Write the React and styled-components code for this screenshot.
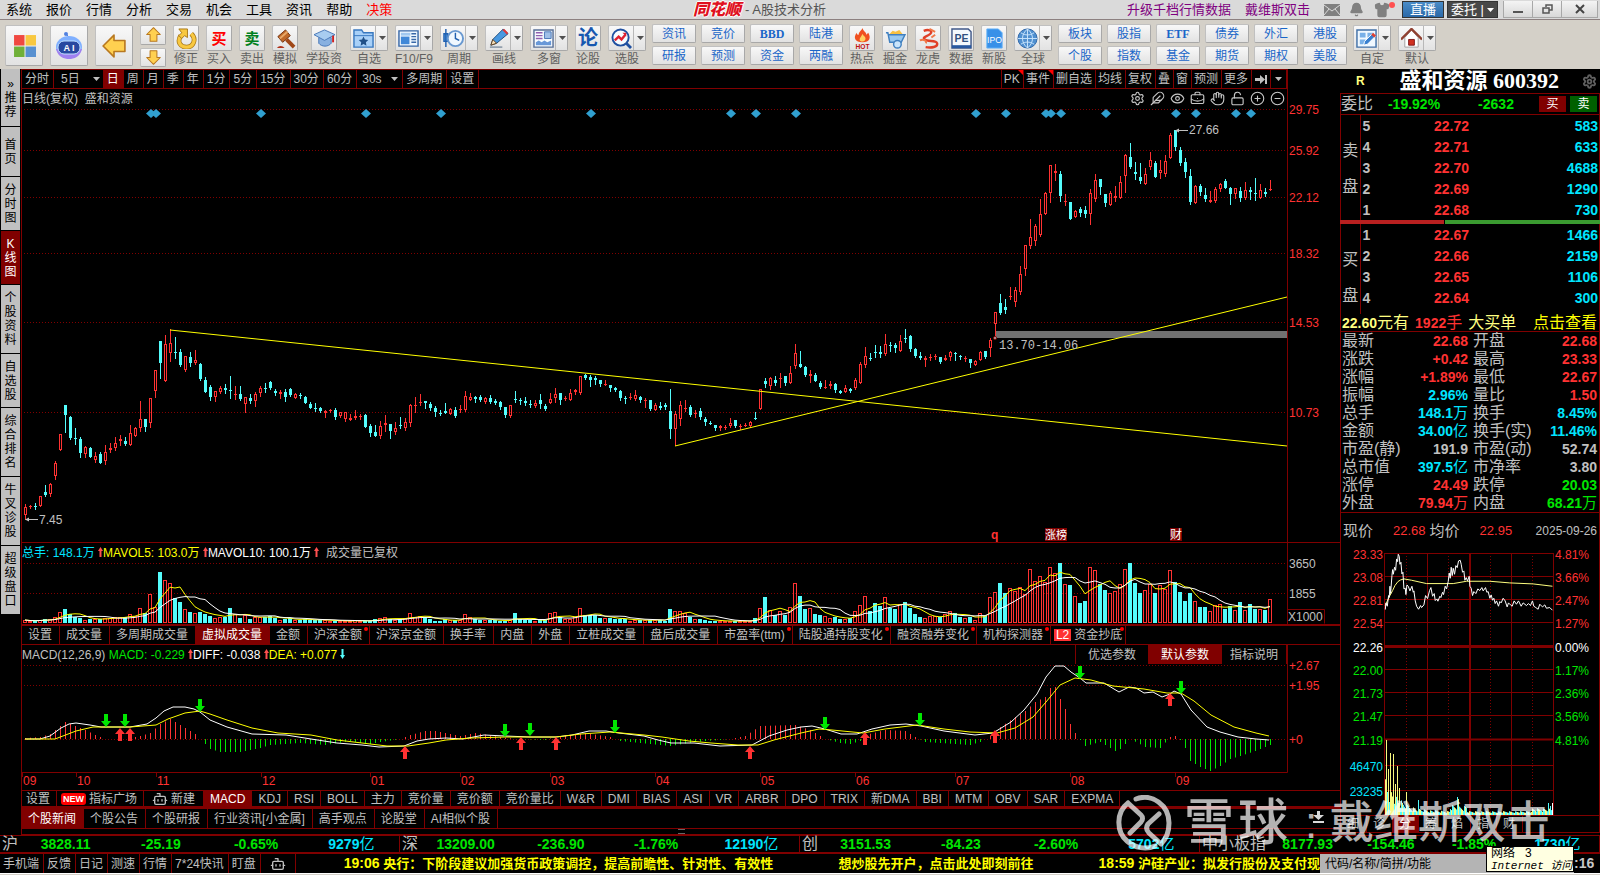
import React from "react";
import styled, { createGlobalStyle, css } from "styled-components";
import {
  Settings,
  Feather,
  Eye,
  BriefcaseBusiness,
  Hand,
  LockOpen,
  CirclePlus,
  CircleMinus,
  Bot,
  Bell,
  Shirt,
} from "lucide-react";

const RED = "#ff3232";
const GREEN = "#00e600";
const CYAN = "#00e5ff";
const LINE = "#800000";
const GREY = "#c0c0c0";

/* one entry per day: r = up, c = down, then high, body top, body bottom, low */
const CANDLES = `
r504,507,515,519 r505,506,507,508 c503,506,507,509 r496,496,506,506 c485,492,495,496 r483,484,494,496 r461,463,476,479 r434,434,450,450 c405,405,415,432 c416,417,438,439
c428,438,439,444 c437,439,453,457 r446,447,454,457 c447,448,457,457 r452,456,460,462 c452,454,463,463 r445,452,461,464 r443,448,450,452 r437,443,448,450 r435,439,441,445
c437,441,444,445 r425,433,445,445 r427,428,436,436 r401,419,428,431 c419,419,427,431 r398,398,423,427 r370,370,391,397 c341,341,363,378 r335,344,381,381 r329,343,353,361
c337,352,353,358 c349,352,365,366 r356,356,370,371 c352,357,363,366 r350,360,363,364 c363,364,379,380 c377,380,392,392 c385,387,397,400 r391,391,397,401 r386,388,392,393
c384,388,390,393 c376,390,391,398 r386,394,395,399 c386,394,399,400 r397,397,404,412 c394,398,401,403 r392,394,401,406 r386,388,393,396 c383,388,389,392 c381,382,388,389
c389,391,393,395 r390,392,394,398 c389,392,397,401 c388,389,395,396 r393,394,398,398 c393,395,396,398 c396,397,403,403 c402,404,408,408 c403,408,409,411 c407,408,411,412
r410,411,413,417 r409,410,411,412 c408,410,417,419 r412,412,416,417 r412,412,419,421 r414,418,420,420 r410,416,418,419 r414,416,417,419 c414,415,427,427 c424,426,433,436
c425,432,436,436 r421,426,436,438 r415,423,425,431 c424,424,431,438 r422,428,432,434 c417,425,426,428 r418,422,428,430 r404,405,423,426 r397,405,406,412 r394,402,403,405
c401,401,403,408 c402,404,408,410 c406,408,412,416 c410,413,414,415 c403,411,413,413 r408,409,414,414 c407,410,416,417 r405,409,410,412 r391,396,410,411 r393,397,400,400
c396,397,399,402 c395,397,400,401 r397,398,402,403 c395,398,402,403 c399,401,403,404 c401,402,407,409 c407,407,415,417 r405,405,416,417 c391,399,400,402 c398,400,401,404
c397,401,403,405 c400,404,405,407 r400,403,406,407 c394,400,404,408 c404,406,409,410 r393,399,403,403 r388,394,398,402 c393,393,400,404 r396,398,399,400 r389,393,400,400
r389,390,392,394 r376,376,393,394 c374,375,378,379 c375,377,380,386 c376,378,380,384 c380,380,384,386 r380,384,385,385 c385,385,388,391 c387,388,390,391 c390,391,398,400
c396,398,399,403 r393,397,398,399 r390,395,399,400 c396,397,400,402 r398,400,401,407 c400,400,409,410 r403,405,410,410 c402,406,408,409 c403,405,407,409 c389,411,429,438
r411,414,429,445 r401,405,419,425 r400,408,409,411 c405,407,415,416 r410,413,414,417 c408,411,417,419 c417,419,422,425 c421,423,424,424 c425,425,428,430 r425,426,428,430
r425,427,428,429 r418,423,426,427 c420,420,426,427 r424,426,427,429 r423,425,426,426 r421,422,426,427 c412,418,419,419 r389,389,409,409 c378,381,384,387 r377,378,386,389
c376,380,383,385 r373,378,379,387 c376,376,383,385 r366,373,383,383 r344,353,366,368 c351,364,367,367 c366,367,375,376 r370,374,376,382 c373,375,381,381 c381,383,387,388
r380,387,388,388 r381,384,386,388 c383,384,390,392 c390,391,393,393 r385,388,392,392 c388,389,391,392 r378,380,388,389 r362,364,383,383 r347,356,365,367 c353,358,359,360
c345,352,353,357 c346,352,354,357 r334,344,354,355 c342,345,346,351 c343,345,348,352 r335,341,351,351 c329,338,339,342 c335,336,349,351 c348,349,356,357 c352,356,358,359
r356,358,360,366 r354,357,358,360 r354,356,357,359 c357,357,362,363 r355,358,360,360 r351,352,357,360 c352,353,354,360 c355,356,357,359 r356,358,359,361 c359,359,363,367
r360,361,365,365 r351,352,360,360 c351,351,357,358 r338,340,348,356 r312,312,324,338 c294,303,313,314 c299,307,310,313 r287,296,297,299 r287,290,302,306 r266,274,292,294
r245,245,269,275 r219,237,246,248 r224,226,241,245 r199,214,235,236 r192,193,214,214 r165,165,193,202 r164,171,173,180 c171,174,196,201 r194,201,202,205 c202,202,219,219
r210,211,217,217 c207,209,213,216 c206,210,214,217 r189,193,214,224 r174,180,199,201 c179,179,187,194 c194,194,203,206 r191,193,205,205 r186,196,198,201 r176,182,198,198
r154,155,176,192 c143,157,167,168 c162,172,174,179 c163,177,181,183 r168,174,184,184 r152,160,167,169 c161,163,177,177 r160,170,173,178 r155,161,174,176 r133,135,158,158
c130,130,147,150 c147,150,163,165 c158,162,172,177 c169,176,202,204 r185,186,203,203 c184,186,192,195 c188,195,199,201 r191,200,202,202 r187,189,201,202 r183,184,189,191
c179,181,188,188 c187,188,194,204 r188,188,194,198 c187,191,198,201 r182,190,198,199 c187,190,192,199 c178,193,194,200 r184,190,198,198 c188,192,194,196 r180,189,190,190`
  .trim()
  .split(/\s+/)
  .map((s, i) => {
    const [high, top, bottom, low] = s.slice(1).split(",").map(Number);
    return { up: s[0] === "r", x: 25 + 5 * i, high, top, bottom, low };
  });

const VOLUMES = `
3 2 2 3 4 4 6 11 14 9 6 5 3 4 4 4 5 5 6 6 6 9 7 15 10 29 16 51 43 40 25 21 14 11 10 11 9 7 5 6 6 15 9 5 8 4 6 6 6 7
5 3 4 5 3 3 4 3 3 3 3 2 2 2 2 2 3 2 2 2 4 5 6 4 3 4 5 10 6 7 6 4 2 2 4 3 3 3 9 6 4 3 3 3 3 2 2 3 10 4
3 3 2 3 3 10 11 6 4 4 6 15 8 8 8 5 5 5 4 4 4 2 3 3 3 3 3 3 2 14 12 12 10 6 4 4 3 2 2 2 2 2 2 2 2 2 5 15 26 13
8 12 8 16 40 27 14 15 9 8 7 5 6 4 4 5 12 18 27 12 20 17 26 15 14 19 21 15 9 6 5 7 7 6 9 12 10 6 5 6 3 10 7 26 31 40 30 35 32 36
29 54 42 47 41 56 50 60 39 38 27 20 22 56 53 39 33 30 32 39 54 60 40 30 33 39 30 38 34 53 41 31 22 30 22 16 16 12 18 19 14 17 13 21 13 19 14 14 13 24`
  .trim()
  .split(/\s+/)
  .map(Number);

const average = (size) =>
  VOLUMES.map((_, i) => {
    const part = VOLUMES.slice(Math.max(0, i - size + 1), i + 1);
    const mean = part.reduce((a, b) => a + b, 0) / part.length;
    return `${25 + 5 * i},${(623 - mean).toFixed(1)}`;
  }).join(" ");

/* [day, height], the days between are interpolated */
const HIST_KEYS = [
  [0, 1], [3, 2], [5, 5], [6, 9], [8, 17], [10, 13], [12, 9], [14, 4], [16, 0], [20, 0], [23, 3], [25, 6], [27, 15], [29, 20],
  [31, 14], [33, 8], [34, 5], [35, 0], [36, -5], [37, -10], [39, -13], [43, -13], [47, -9], [49, -6], [55, -4], [60, -6],
  [65, -2], [67, -4], [69, -5], [71, -3], [75, 0], [77, 4], [80, 8], [82, 8], [87, 3], [90, 6], [95, 2], [98, 0], [104, -1],
  [106, 2], [112, 6], [117, 2], [119, -2], [125, -5], [129, -7], [134, -3], [141, 0], [144, 3], [147, 13], [154, 14], [157, 9],
  [160, 0], [163, -4], [165, -5], [167, -2], [168, 4], [172, 9], [176, 8], [178, 2], [180, -3], [189, -6], [191, -3], [193, 3],
  [195, 12], [198, 22], [200, 28], [202, 37], [204, 42], [205, 51], [206, 52], [207, 40], [208, 30], [209, 15], [210, 6],
  [211, -1], [212, -7], [215, -3], [218, -12], [219, -10], [221, 0], [224, -8], [227, -9], [229, 2], [230, 3], [231, -1],
  [232, -9], [233, -22], [235, -28], [237, -32], [239, -27], [241, -20], [243, -17], [246, -12], [249, -6],
];
const HIST = [];
HIST_KEYS.slice(1).forEach(([to, b], k) => {
  const [from, a] = HIST_KEYS[k];
  for (let i = from; i < to; i++) HIST.push(a + ((b - a) * (i - from)) / (to - from));
});
HIST.push(-6);

const DIFF =
  "25,739 40,739 50,736 61,728 69,724 76,723 90,725 101,727 130,727 147,724 156,718 164,711 173,707 185,707 194,709 200,712 210,720 227,727 252,734 286,735 311,739 337,743 362,745 379,747 404,746 417,741 429,739 446,738 463,739 484,735 505,736 530,737 556,737 572,735 589,731 606,731 619,733 644,736 658,740 671,743 694,743 720,746 752,745 769,736 787,730 801,727 812,726 825,729 841,734 857,734 872,729 890,725 906,724 921,726 944,731 975,735 993,733 1011,722 1024,710 1037,694 1046,677 1055,666 1064,666 1071,672 1080,678 1086,683 1104,683 1119,692 1129,687 1136,688 1144,693 1153,692 1162,697 1170,694 1174,691 1181,694 1191,710 1207,727 1220,732 1238,737 1256,739 1269,740";
const DEA =
  "25,739 55,739 76,731 93,727 130,727 156,725 168,719 185,713 200,711 210,714 227,720 252,728 278,733 311,735 337,740 362,743 387,746 408,746 429,743 446,740 471,738 505,737 556,737 581,734 610,732 644,735 662,737 689,741 711,743 738,745 758,745 774,740 801,733 819,729 832,730 863,733 885,729 917,725 944,729 970,732 997,733 1015,728 1033,717 1046,702 1060,685 1075,678 1091,680 1113,686 1144,689 1167,693 1181,693 1194,701 1211,715 1234,727 1256,733 1269,736";

const DOWN_MARKS = [[106, 727], [125, 727], [200, 712], [505, 737], [530, 736], [615, 733], [825, 730], [920, 726], [1080, 679], [1181, 694]];
const UP_MARKS = [[120, 728], [130, 728], [405, 746], [521, 737], [556, 737], [750, 746], [865, 732], [995, 730], [1170, 693]];
const MONTHS = [["09", 23], ["10", 77], ["11", 157], ["12", 262], ["01", 371], ["02", 461], ["03", 551], ["04", 656], ["05", 761], ["06", 856], ["07", 956], ["08", 1071], ["09", 1176]];
const DIAMONDS = [151, 156, 261, 366, 441, 591, 731, 756, 796, 976, 1006, 1046, 1051, 1061, 1106, 1176, 1196, 1236, 1251];
const PRICES = [["29.75", 109], ["25.92", 150], ["22.12", 197], ["18.32", 253], ["14.53", 322], ["10.73", 412]];

const Global = createGlobalStyle`
  * { box-sizing: border-box; }
  body {
    margin: 0;
    background: #000;
    color: ${GREY};
    font: 12px/16px "Liberation Sans", "Noto Sans CJK SC", sans-serif;
  }
  button, input { font: inherit; }
  button { cursor: pointer; white-space: nowrap; }
`;

const Page = styled.div`
  position: relative;
  min-height: 100vh;
  display: flex;
  flex-direction: column;
  overflow: hidden;
`;

/* ---------- title bar ---------- */

const TitleBar = styled.header`
  display: flex;
  justify-content: space-between;
  align-items: center;
  height: 20px;
  background: #dadada;
  border-bottom: 1px solid #8c8080;
  font-size: 13px;
  color: #000;
`;
const Menu = styled.nav`
  display: flex;
  gap: 14px;
  padding-left: 6px;
`;
const MenuLink = styled.a`
  color: ${(p) => (p.$hot ? "#f00" : "#000")};
  text-decoration: none;
`;
const AppTitle = styled.div`
  display: flex;
  align-items: center;
  gap: 4px;
  color: #555;
`;
const Logo = styled.b`
  color: #e01020;
  font-size: 16px;
  font-weight: 900;
  font-style: italic;
  text-shadow: 1px 0 #fff, -1px 0 #fff, 0 1px #fff, 0 -1px #fff;
`;
const TitleRight = styled.div`
  display: flex;
  align-items: center;
  height: 100%;
  padding-right: 2px;
`;
const Promo = styled.a`
  margin-right: 14px;
  color: #800080;
  text-decoration: none;
`;
const TitleIcon = styled.button`
  position: relative;
  display: flex;
  width: 25px;
  padding: 0;
  border: 0;
  background: none;
  color: #808080;
`;
const Dot = styled.span`
  position: absolute;
  top: 0;
  right: 4px;
  width: 6px;
  height: 6px;
  border-radius: 50%;
  background: #ff5050;
`;
const HeadButton = styled.button`
  display: flex;
  align-items: center;
  gap: 3px;
  height: 17px;
  margin-left: 3px;
  padding: 0 ${(p) => (p.$blue ? 7 : 3)}px;
  border: 1px solid #333;
  background: ${(p) => (p.$blue ? "linear-gradient(#4a8cc8, #2a68a8)" : "#484848")};
  color: #fff;
  line-height: 14px;
`;
const WinButton = styled.button`
  display: flex;
  align-items: center;
  justify-content: center;
  width: ${(p) => (p.$wide ? 37 : 30)}px;
  height: 17px;
  border: 1px solid #a8a8a8;
  border-top: 0;
  margin-left: ${(p) => (p.$first ? 5 : -1)}px;
  background: linear-gradient(#f4f4f4, #d8d8d8);
`;

/* ---------- toolbar ---------- */

const Toolbar = styled.div`
  display: flex;
  align-items: flex-start;
  gap: 7px;
  height: 49px;
  padding: 5px 5px 0;
  background: #d4d0c8;
`;
const raised = css`
  border: 1px solid #c0c0c0;
  border-right-color: #a8a8a8;
  border-bottom-color: #a8a8a8;
  border-radius: 2px;
  background: linear-gradient(#f8f8f8, #e2e2e2);
  padding: 0;
`;
const BigButton = styled.button`
  ${raised}
  display: flex;
  align-items: center;
  justify-content: center;
  width: 38px;
  height: 41px;
`;
const ArrowStack = styled.div`
  display: grid;
  gap: 3px;
  width: 26px;
  height: 42px;
  button {
    ${raised}
    display: flex;
    align-items: center;
    justify-content: center;
  }
`;
const Tool = styled.button`
  display: flex;
  flex-direction: column;
  align-items: center;
  min-width: ${(p) => (p.$split ? 38 : 26)}px;
  padding: 0;
  border: 0;
  background: none;
  color: #606060;
  line-height: 17px;
`;
const ToolFace = styled.span`
  ${raised}
  display: flex;
  flex: none;
  align-items: center;
  justify-content: center;
  width: ${(p) => (p.$split ? 38 : 26)}px;
  height: 26px;
  svg:first-child { flex: none; }
`;
const SplitArrow = styled.i`
  display: flex;
  align-items: center;
  height: 100%;
  margin-left: 1px;
  padding-left: 3px;
  border-left: 1px solid #b8b8b8;
`;
const Glyph = styled.b`
  color: ${(p) => p.$color};
  font-size: ${(p) => p.$size || 15}px;
`;
const LinkGrid = styled.div`
  display: grid;
  grid-auto-flow: column;
  grid-template-rows: 19px 19px;
  grid-auto-columns: 44px;
  gap: 3px 5px;
  margin: -1px -1px 0;
`;
const LinkButton = styled.button`
  ${raised}
  color: #1a66c8;
  ${(p) => p.$latin && css`font-family: "Liberation Serif", serif; font-weight: bold;`}
`;

/* ---------- shared ---------- */

const Row = styled.div`
  display: flex;
  height: ${(p) => p.$h}px;
  border-top: ${(p) => p.$top || 0}px solid ${LINE};
  border-bottom: ${(p) => p.$bottom || 0}px solid ${LINE};
`;
const Tab = styled.button`
  position: relative;
  display: flex;
  align-items: center;
  justify-content: center;
  gap: 3px;
  padding: 0 ${(p) => p.$pad || 7}px 0 ${(p) => p.$lead || p.$pad || 6}px;
  border: 0;
  border-right: 1px solid ${LINE};
  background: ${(p) => (p.$active ? LINE : "none")};
  color: ${(p) => (p.$active ? "#fff" : GREY)};
`;
const Hot = styled.span`
  position: absolute;
  top: 1px;
  right: 1px;
  width: 4px;
  height: 4px;
  border-radius: 50%;
  background: #f00;
`;
const Corner = styled.span`
  position: absolute;
  top: 0;
  right: 0;
  border-top: 5px solid #f00;
  border-left: 5px solid transparent;
`;
const Tag = styled.em`
  padding: 0 2px;
  border-radius: ${(p) => (p.$round ? 3 : 0)}px;
  background: ${(p) => (p.$round ? "#f00" : RED)};
  color: #fff;
  font-size: ${(p) => (p.$round ? 9 : 12)}px;
  font-style: normal;
  font-weight: ${(p) => (p.$round ? "bold" : "normal")};
  line-height: 12px;
`;

/* ---------- main area ---------- */

const Main = styled.main`
  display: grid;
  grid-template-columns: 21px minmax(0, 1fr) 260px;
`;
const Side = styled.nav`
  display: flex;
  flex-direction: column;
  gap: 1px;
  padding-left: 1px;
`;
const SideTab = styled.button`
  width: 19px;
  height: ${(p) => p.$h}px;
  padding: 0;
  border: 0;
  background: ${(p) => (p.$active ? LINE : "#c0c0c0")};
  color: ${(p) => (p.$active ? "#fff" : "#000")};
  line-height: 14px;
  span { display: block; }
`;
const Center = styled.section`
  display: flex;
  flex-direction: column;
  border-left: 1px solid ${LINE};
  min-width: 0;
`;
const Bounded = styled(Row)`
  margin-right: 52px;
  border-right: 1px solid ${LINE};
  justify-content: space-between;
`;
const Group = styled.div`
  display: flex;
  border-left: ${(p) => (p.$edge ? 1 : 0)}px solid ${LINE};
`;
const Legend = styled.p`
  margin: 0;
  line-height: 20px;
  white-space: nowrap;
`;
const Ink = styled.span`
  color: ${(p) => p.$c};
`;
const ChartTools = styled.div`
  display: flex;
  align-items: center;
  gap: 5px;
  padding-right: 2px;
  button {
    display: flex;
    padding: 0;
    border: 0;
    background: none;
    color: #c8c8c8;
  }
`;
const Chart = styled.svg`
  display: block;
  width: 100%;
  height: auto;
  overflow: visible;
  font-size: 12px;
`;
const Collapse = styled.button`
  margin: 0 16px 0 auto;
  padding: 0;
  border: 0;
  background: none;
`;
const Splitter = styled.div`
  display: flex;
  justify-content: center;
  flex: 1;
  border-bottom: 1px solid ${LINE};
  &::after {
    content: "";
    width: 7px;
    height: 3px;
    border: solid #666;
    border-width: 1px 0;
  }
`;

/* ---------- quote panel ---------- */

const Quote = styled.aside`
  display: flex;
  flex-direction: column;
  min-width: 0;
`;
const NameRow = styled.div`
  display: flex;
  align-items: center;
  justify-content: space-between;
  height: 24px;
  padding: 0 3px 0 16px;
`;
const StockName = styled.h1`
  margin: 0 0 0 12px;
  color: #fff;
  font: bold 22px/24px "Liberation Serif", "Noto Sans CJK SC", serif;
`;
const Box = styled.div`
  border: solid ${LINE};
  border-width: 1px 1px 0;
`;
const RatioRow = styled(Box)`
  display: flex;
  align-items: center;
  height: 21px;
  font-size: 16px;
  b {
    flex: 1;
    color: ${GREEN};
    font-size: 14px;
    text-align: center;
  }
`;
const Trade = styled.button`
  width: 27px;
  height: 16px;
  margin: 0 2px;
  padding: 0;
  border: 0;
  background: ${(p) => p.$bg};
  color: #fff;
  font-size: 12px;
  line-height: 16px;
`;
const Book = styled(Box)`
  height: ${(p) => p.$h}px;
  overflow: hidden;
  ${(p) => p.$plain && css`border-top: 0;`}
`;
const BookTable = styled.table`
  width: 100%;
  border-collapse: collapse;
  font-size: 14px;
  font-weight: bold;
  td, th { height: 21px; padding: 0; }
`;
const SideCell = styled.th`
  && {
    width: 19px;
    padding-top: ${(p) => (p.$topped ? 18 : 3)}px;
    border-right: 1px solid ${LINE};
    font-size: 16px;
    font-weight: normal;
    line-height: 36px;
    vertical-align: ${(p) => (p.$topped ? "top" : "middle")};
  }
`;
const Cell = styled.td`
  && {
    width: ${(p) => p.$w};
    padding: 0 1px 0 ${(p) => (p.$left ? 2 : 0)}px;
    color: ${(p) => p.$c || GREY};
    text-align: ${(p) => (p.$left ? "left" : "right")};
  }
`;
const Strength = styled.div`
  display: flex;
  gap: 1px;
  height: 4px;
  &::before { content: ""; width: 40%; background: #b82020; }
  &::after { content: ""; flex: 1; background: #3a9a30; }
`;
const BigOrder = styled.div`
  display: flex;
  align-items: center;
  height: 17px;
  padding: 0 2px 0 1px;
  border: solid ${LINE};
  border-width: 0 1px;
  color: #ffff80;
  font-size: 16px;
  white-space: nowrap;
  b { font-size: 14px; }
  i { margin: 0 6px; color: ${RED}; font-style: normal; }
  a { margin-left: auto; color: #ff0; text-decoration: none; }
`;
const Stats = styled.table`
  width: 100%;
  table-layout: fixed;
  border-collapse: collapse;
  font-size: 16px;
  th, td {
    height: 18px;
    padding: 0 2px 0 1px;
    line-height: 18px;
    white-space: nowrap;
    overflow: visible;
  }
  th { width: 58px; font-weight: normal; text-align: left; }
  td { text-align: right; font-size: 14px; font-weight: bold; }
  td + th { padding-left: 3px; }
  small { font-size: 15px; font-weight: normal; }
`;
const Now = styled(Box)`
  display: flex;
  align-items: flex-end;
  height: 33px;
  padding: 0 2px 6px;
  strong { font-size: 15px; font-weight: normal; }
  span { margin: 0 4px 0 20px; color: ${RED}; font-size: 13px; }
  time { margin-left: auto; }
`;
const MiniTabs = styled(Box)`
  display: flex;
  height: 18px;
  border-bottom-width: 1px;
`;
const MiniBox = styled(Box)`
  border-top: 0;
`;

/* ---------- bottom bars ---------- */

const Indexes = styled.div`
  display: grid;
  grid-template-columns: repeat(4, 1fr);
  height: 19px;
  border-top: 1px solid ${LINE};
  border-bottom: 2px solid ${LINE};
`;
const IndexCell = styled.div`
  display: flex;
  align-items: center;
  padding-left: 2px;
  border-right: 1px solid ${LINE};
  font-size: 16px;
  b {
    flex: 1;
    color: ${GREEN};
    font-size: 14px;
    text-align: center;
  }
  b:last-child { color: ${CYAN}; }
  small { font-size: 15px; font-weight: normal; }
`;
const Bottom = styled.footer`
  display: flex;
  height: 19px;
`;
const Ticker = styled.div`
  flex: 1;
  display: flex;
  justify-content: space-between;
  min-width: 0;
  padding-left: 48px;
  overflow: hidden;
  color: #ff0;
  font-size: 13px;
  font-weight: bold;
  line-height: 19px;
  white-space: nowrap;
  b { font-size: 14px; }
`;
const Search = styled.input`
  width: 254px;
  padding: 0 5px;
  border: 0;
  border-radius: 0;
  background: #b4b4b4;
  color: #000;
  &::placeholder { color: #000; opacity: 1; }
`;
const Clock = styled.time`
  width: 26px;
  color: #c8c8c8;
  font-size: 14px;
  font-weight: bold;
  line-height: 19px;
`;
const Edge = styled.div`
  height: 3px;
  background: #d4d0c8;
  border-top: 1px solid #fff;
`;
const Tip = styled.div`
  position: absolute;
  right: 26px;
  bottom: 4px;
  width: 88px;
  height: 26px;
  padding-left: 4px;
  border: 1px solid #000;
  background: #ffffe1;
  color: #000;
  line-height: 12px;
  white-space: pre;
  i { font-family: "Liberation Mono", "Noto Sans CJK SC", monospace; font-size: 11px; }
`;
const Watermark = styled.div`
  position: absolute;
  right: 50px;
  bottom: 25px;
  display: flex;
  align-items: center;
  color: rgba(255, 255, 255, 0.7);
  font-size: 44px;
  font-weight: 500;
  line-height: 56px;
  pointer-events: none;
  svg { margin-right: 12px; }
  b { margin-right: 4px; font-size: 50px; font-weight: 500; }
  span { width: 38px; text-align: center; }
`;

/* ---------- icons ---------- */

const Caret = ({ color = "#505050" }) => (
  <svg width="7" height="4" viewBox="0 0 7 4" aria-hidden="true">
    <path d="M0 0h7L3.500 4z" fill={color} />
  </svg>
);

/* up by default */
const Trend = ({ down }) => (
  <svg width="5" height="10" viewBox="0 0 5 10" aria-hidden="true">
    <path
      d="M2.500 0 5 4H3.500v6h-2V4H0z"
      transform={down ? "rotate(180 2.500 5)" : undefined}
      fill={down ? "#54fcfc" : "#ff5050"}
    />
  </svg>
);

const GoldArrow = ({ size, turn }) => (
  <svg width={size} height={size} viewBox="0 0 22 22" aria-hidden="true">
    <path
      d="M1 11 11 1v5h10v10H11v5z"
      transform={`rotate(${turn} 11 11)`}
      fill="#ffd050"
      stroke="#b87820"
      strokeWidth="1.500"
      strokeLinejoin="round"
    />
  </svg>
);

const ICONS = {
  squares: (
    <>
      <path d="M1 1h10v10H1z" fill="#f04840" />
      <path d="M12 1h10v10H12z" fill="#f8c840" />
      <path d="M1 12h10v10H1z" fill="#70b038" />
      <path d="M12 12h10v10H12z" fill="#5890d0" />
    </>
  ),
  fix: (
    <>
      <path d="M5 8c-4 6-1 12 6 12s11-8 5-14" fill="none" stroke="#a87818" strokeWidth="5" />
      <path d="M5 8c-4 6-1 12 6 12s11-8 5-14" fill="none" stroke="#f8c840" strokeWidth="3.400" />
      <path d="M3 1h9v9L9 8l-3 3-3-3 3-3z" fill="#f8c840" stroke="#a87818" />
    </>
  ),
  gavel: (
    <>
      <path d="m3 9 8-7 5 6-8 7z" fill="#c06828" stroke="#703010" />
      <path d="m5 11 8-7" stroke="#e8a868" strokeWidth="2" />
      <path d="m12 12 8 8" stroke="#a04818" strokeWidth="4" />
      <path d="M2 21c2-3 6-3 8 0z" fill="#b03018" />
    </>
  ),
  cap: (
    <>
      <path d="M5 10v6c3 4 10 4 13 0v-6z" fill="#88b0e0" stroke="#4878b8" />
      <path d="m11 2 11 5-11 6L0 7z" fill="#a8ccf0" stroke="#4878b8" />
      <path d="M20 8v7" stroke="#d02020" strokeWidth="2" />
    </>
  ),
  folder: (
    <>
      <path d="M1 5V2h8l2 3h10v15H1z" fill="#a8d0f8" stroke="#3878c0" strokeWidth="1.500" />
      <path d="M1 8h20" stroke="#3878c0" />
      <path d="m11 9 1.500 3 3.500.5-2.500 2.500.6 3.500-3.100-1.700L8 18.500l.6-3.500L6 12.500l3.500-.5z" fill="#205088" />
    </>
  ),
  news: (
    <>
      <path d="M1 3h20v16H1z" fill="#f0f8ff" stroke="#3868a8" strokeWidth="1.500" />
      <path d="M3 5h10v3H3z" fill="#a0c8f0" />
      <path d="M3 9h9v8H3z" fill="#4088d8" />
      <path d="M14 9h5m-5 3h5m-5 3h5M14 6h5" stroke="#3868a8" strokeWidth="1.500" />
    </>
  ),
  clock: (
    <>
      <path d="M3 1v19M1 6h4v8H1z" stroke="#2060b0" strokeWidth="1.500" fill="#60a8f0" />
      <circle cx="13" cy="11" r="8" fill="#f0f8ff" stroke="#6898d0" strokeWidth="2" />
      <path d="M13 5v6l4 2" fill="none" stroke="#2060b0" strokeWidth="1.500" />
    </>
  ),
  pencil: (
    <>
      <path d="m3 18 2-6L16 1l5 5L9 16z" fill="#4898e0" stroke="#205080" />
      <path d="m15 2 2-1 4 4-1 2z" fill="#e03838" />
      <path d="m3 18 2-6 4 4z" fill="#f8e0b8" stroke="#604020" />
      <path d="M2 20h13" stroke="#8090a0" strokeWidth="1.500" />
    </>
  ),
  windows: (
    <>
      <path d="M1 2h20v18H1z" fill="#f8fcff" stroke="#587098" strokeWidth="1.500" />
      <path d="M3 5h7m-7 3h7m-7 3h7" stroke="#9060b0" strokeWidth="1.500" />
      <path d="M12 4h7v7h-7z" fill="#a0c0e8" stroke="#4878b8" />
      <path d="M3 18v-3l3-2 3 2 3-2 3 2 4-2v5z" fill="#6898d8" />
    </>
  ),
  pick: (
    <>
      <circle cx="10" cy="10" r="8.500" fill="#f8fcff" stroke="#2050a0" strokeWidth="2" />
      <path d="m16 16 5 5" stroke="#2050a0" strokeWidth="3" />
      <path d="m4 13 4-4 3 3 4-5" fill="none" stroke="#e02030" strokeWidth="2.500" />
      <path d="M12 5h4v4z" fill="#e02030" />
    </>
  ),
  fire: (
    <>
      <path d="M11 0c1 4 4 4 4 7l2-2c3 5 2 10-6 10S1 10 5 5c0 2 1 2 2 2 0-3 3-4 4-7z" fill="#f05020" />
      <path d="M11 6c1 3 4 3 3 6-1 3-6 3-6 0 0-2 2-3 3-6z" fill="#ffd060" />
      <text x="11" y="22" textAnchor="middle" fontSize="7" fontWeight="bold" fill="#c01010">HOT</text>
    </>
  ),
  cart: (
    <>
      <path d="m4 7 4-4 3 1 4-2 4 5z" fill="#f8c040" />
      <path d="M1 5h2l2 10h12l4-8H4" fill="#98c8f0" stroke="#4080c0" strokeWidth="1.500" />
      <circle cx="13" cy="17" r="4" fill="#c8e4fc" stroke="#4080c0" strokeWidth="1.500" />
    </>
  ),
  dragon: (
    <>
      <path d="M6 3c5-2 10 0 7 3S4 9 7 12s12 0 13 4-6 5-12 4" fill="none" stroke="#e04028" strokeWidth="2.500" />
      <path d="M2 13c4-2 8 1 6 3M12 1l6 3M14 10l4-3" fill="none" stroke="#f07848" strokeWidth="2" />
    </>
  ),
  pe: (
    <>
      <path d="M1 1h17l3 3v17H1z" fill="#f4f8fc" stroke="#405888" strokeWidth="1.500" />
      <path d="M1 18h20v3H1z" fill="#2858a0" />
      <text x="11" y="15" textAnchor="middle" fontSize="11" fontWeight="bold" fill="#305080">PE</text>
    </>
  ),
  ipo: (
    <>
      <path d="M3 1h12l4 4v16H3z" fill="#3890e8" stroke="#60b0f8" />
      <text x="11" y="16" textAnchor="middle" fontSize="9" fill="#fff">IPO</text>
    </>
  ),
  globe: (
    <>
      <circle cx="11" cy="11" r="10" fill="#5090d0" stroke="#3068a8" />
      <path d="M1 11h20M11 1v20M4 5c5 3 9 3 14 0M4 17c5-3 9-3 14 0M11 1c-7 6-7 14 0 20 7-6 7-14 0-20" fill="none" stroke="#c8e4fc" />
    </>
  ),
  custom: (
    <>
      <path d="M1 2h20v18H1z" fill="#f0f8ff" stroke="#4070a8" strokeWidth="1.500" />
      <path d="M4 5h6v5H4zM12 5h6v5h-6zM4 12h6v5H4z" fill="#78b0e8" />
      <path d="m8 18 1-4 8-8 3 3-8 8z" fill="#3880d0" stroke="#fff" />
      <path d="m16 7 2-2 3 3-2 2z" fill="#e04030" />
    </>
  ),
  home: (
    <>
      <path d="M4 10v10h14V10l-7-8z" fill="#fff" stroke="#a0a0a0" />
      <path d="M0 12 11 1l11 11" fill="none" stroke="#904030" strokeWidth="2.500" />
      <path d="M8 12h6v6H8z" fill="#d03020" stroke="#801818" />
    </>
  ),
};

const Icon = ({ name, size = 21 }) => (
  <svg width={size} height={size} viewBox="0 0 22 22" aria-hidden="true">
    {ICONS[name]}
  </svg>
);

const AiRobot = () => (
  <svg width="30" height="30" viewBox="0 0 30 30" aria-hidden="true">
    <circle cx="12" cy="3" r="2" fill="#5080e0" />
    <path d="M12 3l3 3" stroke="#5080e0" />
    <ellipse cx="15" cy="16" rx="13" ry="11" fill="#80b0ff" />
    <path d="M2 18c2 8 8 10 13 10s11-2 13-10z" fill="#a080f0" />
    <rect x="4" y="10" width="22" height="13" rx="6" fill="#2848a0" stroke="#c0e0ff" />
    <text x="15" y="20" textAnchor="middle" fontSize="9" fontWeight="bold" fill="#fff">A I</text>
  </svg>
);

const ToolButton = ({ icon, label, split, children }) => (
  <Tool $split={split || label.length === 3}>
    <ToolFace $split={split}>
      {children || <Icon name={icon} />}
      {split && (
        <SplitArrow>
          <Caret />
        </SplitArrow>
      )}
    </ToolFace>
    {label}
  </Tool>
);

const Links = ({ items }) => (
  <LinkGrid>
    {items.map((t) => (
      <LinkButton key={t} $latin={/[A-Z]/.test(t)}>
        {t}
      </LinkButton>
    ))}
  </LinkGrid>
);

/* ---------- charts ---------- */

const Grid = ({ ys, x1 = 24, x2 = 1286 }) =>
  ys.map((y) => <path key={y} d={`M${x1} ${y + 0.5}H${x2}`} stroke={LINE} strokeDasharray="1 2" />);

const PriceChart = () => (
  <Chart viewBox="22 107 1318 435" role="img" aria-label="日线">
    <path d="M1287.500 107V542" stroke={LINE} />
    <Grid ys={PRICES.map((p) => p[1])} />
    {PRICES.map(([t, y]) => (
      <text key={t} x="1289" y={y + 5} fill={RED}>{t}</text>
    ))}
    {DIAMONDS.map((x) => (
      <path key={x} d={`M${x} 109l5 4.500-5 4.500-5-4.500z`} fill="#30a0d0" />
    ))}
    <rect x="995" y="331" width="292" height="7" fill="#707070" />
    {CANDLES.map((c) => (
      <g key={c.x} shapeRendering="crispEdges">
        {c.up ? (
          <>
            <path d={`M${c.x + 0.5} ${c.high}V${c.top}M${c.x + 0.5} ${c.bottom}V${c.low + 1}`} stroke={RED} />
            {c.bottom - c.top > 2 ? (
              <rect x={c.x - 0.5} y={c.top + 0.5} width="2" height={c.bottom - c.top - 1} fill="none" stroke={RED} />
            ) : (
              <rect x={c.x - 1} y={c.top} width="3" height={c.bottom - c.top} fill={RED} />
            )}
          </>
        ) : (
          <>
            <path d={`M${c.x + 0.5} ${c.high}V${c.low + 1}`} stroke="#54fcfc" />
            <rect x={c.x - 1} y={c.top} width="3" height={c.bottom - c.top} fill="#54fcfc" />
          </>
        )}
      </g>
    ))}
    <path d="M170 330 1287 446M675 446 1287 297" stroke="#ff0" />
    <g fill={GREY}>
      <path d="M26 519.500h12M1176 130.500h12" stroke={GREY} />
      <path d="M25 519.500l4-2v4zM1175 130.500l4-2v4z" />
      <text x="39" y="524">7.45</text>
      <text x="1189" y="134">27.66</text>
      <text x="999" y="349" fontFamily="Liberation Mono, monospace">13.70-14.06</text>
      <circle cx="995" cy="338" r="1.500" stroke={LINE} />
    </g>
    <text x="991" y="539" fill={RED} fontWeight="bold">q</text>
    <path d="M1045 528h22v13h-22zM1170 528h12v13h-12z" fill={LINE} />
    <text x="1045" y="539" fill="#fff" fontSize="11">涨榜</text>
    <text x="1170" y="539" fill="#fff">财</text>
  </Chart>
);

const VolumeChart = () => (
  <Chart viewBox="22 562 1318 62" role="img" aria-label="成交量">
    <path d="M1287.500 543V624" stroke={LINE} />
    <Grid ys={[563, 593]} />
    {VOLUMES.map((v, i) => {
      const { up, x } = CANDLES[i];
      return up ? (
        <rect key={x} x={x - 1.5} y={623.5 - v} width="3" height={Math.max(v - 1, 1)} fill="none" stroke={RED} />
      ) : (
        <rect key={x} x={x - 2} y={623 - v} width="4" height={v} fill="#54fcfc" />
      );
    })}
    <polyline points={average(5)} fill="none" stroke="#ff0" />
    <polyline points={average(10)} fill="none" stroke="#fff" />
    <text x="1289" y="568" fill={GREY}>3650</text>
    <text x="1289" y="598" fill={GREY}>1855</text>
    <path d="M1287.500 609.500h37v14" fill="none" stroke={LINE} />
    <text x="1288" y="621" fill={GREY}>X1000</text>
  </Chart>
);

const MacdChart = () => (
  <Chart viewBox="22 664 1318 126" role="img" aria-label="MACD">
    <path d="M22 772.500H1287.500V664" fill="none" stroke={LINE} />
    <Grid ys={[665, 685, 739]} />
    {HIST.map((h, i) => (
      <path key={i} d={`M${25.5 + 5 * i} 739v${(-h).toFixed(1)}`} stroke={h > 0 ? RED : GREEN} />
    ))}
    <polyline points={DIFF} fill="none" stroke="#fff" />
    <polyline points={DEA} fill="none" stroke="#ff0" />
    {DOWN_MARKS.map(([x, y]) => (
      <path key={x} d={`M${x} ${y}l-5-6h3v-7h4v7h3z`} fill={GREEN} />
    ))}
    {UP_MARKS.map(([x, y]) => (
      <path key={x} d={`M${x} ${y}l-5 6h3v7h4v-7h3z`} fill={RED} />
    ))}
    <g fill={RED}>
      <text x="1289" y="670">+2.67</text>
      <text x="1289" y="690">+1.95</text>
      <text x="1289" y="744">+0</text>
      {MONTHS.map(([t, x]) => (
        <text key={x} x={x} y="785">{t}</text>
      ))}
    </g>
    {MONTHS.map(([, x]) => (
      <path key={x} d={`M${x - 0.5} 773v4`} stroke={LINE} />
    ))}
  </Chart>
);

const MINI_PRICE =
  "166,332 168,312 172,322 176,290 178,295 180,262 182,284 186,230 188,212 190,226 194,205 197,214 200,180 203,188 205,166 208,172 210,196 213,190 216,225 219,220 222,270 226,268 228,287 231,258 235,262 240,276 246,262 250,280 252,276 256,306 260,322 266,331 272,320 275,326 282,318 287,290 293,299 299,275 303,266 308,292 313,284 316,305 321,300 324,307 330,292 333,296 338,280 341,287 346,262 350,270 355,248 358,222 361,238 364,205 367,230 370,208 374,226 378,200 382,206 386,186 391,184 394,196 398,220 402,216 405,244 409,236 413,246 418,232 420,262 424,268 428,290 432,278 438,284 444,270 450,275 456,266 460,276 467,266 471,280 475,278 480,298 484,288 488,304 492,298 496,314 500,306 506,322 510,308 514,312 520,298 526,306 532,324 536,312 542,318 547,322 553,306 560,316 566,306 574,322 580,312 590,320 596,314 602,320 608,306 612,322 618,326 625,331 630,316 638,324 645,318 650,328 660,326 668,334";
const MINI_AVG =
  "166,320 174,302 180,290 188,275 195,260 204,248 212,243 222,240 245,244 290,254 370,254 410,247 480,247 540,252 610,255 668,262";

const SPIKES = { 1: 75, 3: 46, 5: 62, 8: 61, 10: 31, 12: 49, 14: 27, 21: 23, 33: 15, 72: 18, 73: 16, 167: 12, 165: 9, 163: 12 };
const MINI_VOL = Array.from({ length: 168 }, (_, k) => {
  const noise = ((k * 7919 + 13) % 17) / 17;
  const base = 3 + 38 * Math.exp(-k / 13) + (Math.abs(k - 73) < 9 ? 6 : 0) + (k > 145 ? 3 : 0);
  return SPIKES[k] || 1 + base * (0.35 + 0.65 * noise);
});
const MINI_LEFT = [["23.33", 554, RED], ["23.08", 577, RED], ["22.81", 600, RED], ["22.54", 623, RED], ["22.26", 647, "#fff"], ["22.00", 670, GREEN], ["21.73", 693, GREEN], ["21.47", 716, GREEN], ["21.19", 740, GREEN], ["46470", 766, CYAN], ["23235", 791, CYAN]];
const MINI_RIGHT = ["4.81%", "3.66%", "2.47%", "1.27%", "0.00%", "1.17%", "2.36%", "3.56%", "4.81%"];

const MiniChart = () => (
  <Chart viewBox="1341 546 258 270" role="img" aria-label="分时">
    <g stroke={LINE} fill="none">
      {MINI_LEFT.map(([t, y]) => (
        <path key={t} d={`M1384 ${y + 0.5}h169`} strokeWidth={t === "22.26" ? 3 : t === "21.19" ? 2 : 1} />
      ))}
      <path d="M1384.500 554v262M1427.500 554v262M1511.500 554v262M1553.500 554v262" />
      <path d="M1470 554v262" strokeWidth="2" />
      <path d="M1406.500 554v262M1448.500 554v262M1490.500 554v262M1532.500 554v262" strokeDasharray="1 2" />
    </g>
    {MINI_VOL.map((v, k) => (
      <path
        key={k}
        d={`M${1385.5 + k} 816v${(-v).toFixed(1)}`}
        stroke={k === 167 ? "#fff" : (k * 5) % 7 < 3 || SPIKES[k] > 40 ? "#f8f880" : "#54fcfc"}
      />
    ))}
    <g transform="translate(1330 500) scale(0.333)" fill="none" strokeWidth="3">
      <polyline points={MINI_AVG} stroke="#ffff80" />
      <polyline points={MINI_PRICE} stroke="#fff" />
    </g>
    {MINI_LEFT.map(([t, y, c], i) => (
      <g key={t} fill={c}>
        <text x="1383" y={y + 6} textAnchor="end">{t}</text>
        {MINI_RIGHT[i] && <text x="1555" y={y + 6}>{MINI_RIGHT[i]}</text>}
      </g>
    ))}
  </Chart>
);

/* ---------- content ---------- */

const SIDE = [["»推荐", 57], ["首页", 49], ["分时图", 53], ["K线图", 53], ["个股资料", 68], ["自选股", 53], ["综合排名", 68], ["牛叉诊股", 68], ["超级盘口", 68]];
const VOL_TABS = ["设置", "成交量", "多周期成交量", "虚拟成交量", "金额", "沪深金额*", "沪深京金额", "换手率", "内盘", "外盘", "立桩成交量", "盘后成交量", "市盈率(ttm)*", "陆股通持股变化*", "融资融券变化*", "机构探测器*"];
const IND_TABS = ["MACD", "KDJ", "RSI", "BOLL", "主力", "竞价量", "竞价额", "竞价量比", "W&R", "DMI", "BIAS", "ASI", "VR", "ARBR", "DPO", "TRIX", "新DMA", "BBI", "MTM", "OBV", "SAR", "EXPMA"];
const NEWS_TABS = ["个股新闻", "个股公告", "个股研报", "行业资讯[小金属]", "高手观点", "论股堂", "AI相似个股"];
const SELL = [[5, "22.72", 583], [4, "22.71", 633], [3, "22.70", 4688], [2, "22.69", 1290], [1, "22.68", 730]];
const BUY = [[1, "22.67", 1466], [2, "22.66", 2159], [3, "22.65", 1106], [4, "22.64", 300], [5, "22.63", 282]];
const STATS = [
  ["最新", "22.68", RED, "开盘", "22.68", RED],
  ["涨跌", "+0.42", RED, "最高", "23.33", RED],
  ["涨幅", "+1.89%", RED, "最低", "22.67", RED],
  ["振幅", "2.96%", CYAN, "量比", "1.50", RED],
  ["总手", "148.1万", CYAN, "换手", "8.45%", CYAN],
  ["金额", "34.00亿", CYAN, "换手(实)", "11.46%", CYAN],
  ["市盈(静)", "191.9", GREY, "市盈(动)", "52.74", GREY],
  ["总市值", "397.5亿", CYAN, "市净率", "3.80", GREY],
  ["涨停", "24.49", RED, "跌停", "20.03", GREEN],
  ["外盘", "79.94万", RED, "内盘", "68.21万", GREEN],
];
const INDEXES = [
  ["沪", "3828.11", "-25.19", "-0.65%", "9279"],
  ["深", "13209.00", "-236.90", "-1.76%", "12190"],
  ["创", "3151.53", "-84.23", "-2.60%", "5702"],
  ["中小板指", "8177.93", "-154.46", "-1.85%", "1730"],
];

const withUnit = (value) => {
  const [, number, unit] = value.match(/^([^万亿]*)(.?)$/);
  return (
    <>
      {number}
      {unit && <small>{unit}</small>}
    </>
  );
};

const Orders = ({ side, rows, partial }) => (
  <BookTable>
    <tbody>
      {rows.map(([level, price, vol], i) => (
        <tr key={level}>
          {i === 0 && (
            <SideCell rowSpan={rows.length} $topped={partial}>
              {side}
              <br />盘
            </SideCell>
          )}
          <Cell $left $w="14px">{level}</Cell>
          <Cell $c={RED} $w="96px">{price}</Cell>
          <Cell $c={CYAN}>{vol}</Cell>
        </tr>
      ))}
    </tbody>
  </BookTable>
);

const App = () => {
  return (
    <Page>
      <Global />
      <TitleBar>
        <Menu>
          {["系统", "报价", "行情", "分析", "交易", "机会", "工具", "资讯", "帮助", "决策"].map((t) => (
            <MenuLink key={t} href="#" $hot={t === "决策"}>{t}</MenuLink>
          ))}
        </Menu>
        <AppTitle>
          <Logo>同花顺</Logo> - A股技术分析
        </AppTitle>
        <TitleRight>
          <Promo href="#">升级千档行情数据</Promo>
          <Promo href="#">戴维斯双击</Promo>
          <TitleIcon aria-label="邮件">
            <svg width="16" height="12" viewBox="0 0 16 12">
              <path d="M0 0h16v12H0z" fill="#808080" />
              <path d="m0 1 8 6 8-6M0 11l5-6m11 6-5-6" fill="none" stroke="#dadada" />
            </svg>
          </TitleIcon>
          <TitleIcon aria-label="提醒"><Bell size={15} fill="#808080" /></TitleIcon>
          <TitleIcon aria-label="换肤"><Shirt size={16} fill="#808080" /><Dot /></TitleIcon>
          <HeadButton $blue>直播</HeadButton>
          <HeadButton>委托 | <Caret color="#fff" /></HeadButton>
          <WinButton $first aria-label="最小化">
            <svg width="10" height="10"><path d="M0 7h10v2H0z" fill="#555" /></svg>
          </WinButton>
          <WinButton aria-label="还原">
            <svg width="11" height="10"><path d="M4 3V1h6v5H7M1 4h6v5H1z" fill="none" stroke="#555" strokeWidth="1.500" /></svg>
          </WinButton>
          <WinButton $wide aria-label="关闭">
            <svg width="10" height="10"><path d="m1 1 8 8m0-8L1 9" stroke="#444" strokeWidth="2" /></svg>
          </WinButton>
        </TitleRight>
      </TitleBar>

      <Toolbar>
        <BigButton aria-label="主页"><Icon name="squares" size={23} /></BigButton>
        <BigButton aria-label="AI"><AiRobot /></BigButton>
        <BigButton aria-label="返回"><GoldArrow size={24} turn={0} /></BigButton>
        <ArrowStack>
          <button aria-label="上"><GoldArrow size={15} turn={90} /></button>
          <button aria-label="下"><GoldArrow size={15} turn={-90} /></button>
        </ArrowStack>
        <ToolButton icon="fix" label="修正" />
        <ToolButton label="买入"><Glyph $color="#f00">买</Glyph></ToolButton>
        <ToolButton label="卖出"><Glyph $color="#008020">卖</Glyph></ToolButton>
        <ToolButton icon="gavel" label="模拟" />
        <ToolButton icon="cap" label="学投资" />
        <ToolButton icon="folder" label="自选" split />
        <ToolButton icon="news" label="F10/F9" split />
        <ToolButton icon="clock" label="周期" split />
        <ToolButton icon="pencil" label="画线" split />
        <ToolButton icon="windows" label="多窗" split />
        <ToolButton label="论股"><Glyph $color="#1858b0" $size={20}>论</Glyph></ToolButton>
        <ToolButton icon="pick" label="选股" split />
        <Links items={["资讯", "研报", "竞价", "预测", "BBD", "资金", "陆港", "两融"]} />
        <ToolButton icon="fire" label="热点" />
        <ToolButton icon="cart" label="掘金" />
        <ToolButton icon="dragon" label="龙虎" />
        <ToolButton icon="pe" label="数据" />
        <ToolButton icon="ipo" label="新股" />
        <ToolButton icon="globe" label="全球" split />
        <Links items={["板块", "个股", "股指", "指数", "ETF", "基金", "债券", "期货", "外汇", "期权", "港股", "美股"]} />
        <ToolButton icon="custom" label="自定" split />
        <ToolButton icon="home" label="默认" split />
      </Toolbar>

      <Main>
        <Side>
          {SIDE.map(([t, h]) => (
            <SideTab key={t} $h={h} $active={t === "K线图"}>
              {[...t].map((ch) => <span key={ch}>{ch}</span>)}
            </SideTab>
          ))}
        </Side>

        <Center>
          <Bounded $h={20} $top={1} $bottom={1}>
            <Group>
              <Tab $lead={3} $pad={4}>分时</Tab>
              <Tab $lead={7} $pad={3}>5日 &nbsp;&nbsp;<Caret color={GREY} /></Tab>
              {["日", "周", "月", "季", "年", "1分", "5分", "15分", "30分", "60分"].map((t) => (
                <Tab key={t} $lead={3} $pad={4} $active={t === "日"}>{t}</Tab>
              ))}
              <Tab $lead={5} $pad={4}>30s &nbsp;<Caret color={GREY} /></Tab>
              <Tab $lead={3} $pad={4}>多周期</Tab>
              <Tab $lead={3} $pad={4}>设置</Tab>
            </Group>
            <Group $edge>
              {["PK", "事件", "删自选", "均线", "复权", "叠", "窗", "预测", "更多"].map((t, i) => (
                <Tab key={t} $lead={2} $pad={3}>{t}{i < 2 && <Corner />}</Tab>
              ))}
              <Tab $pad={3} aria-label="收起">
                <svg width="12" height="9"><path d="M0 3h5V0l5 4.500L5 9V6H0zM10 0h2v9h-2z" fill={GREY} /></svg>
              </Tab>
              <Tab $pad={4} aria-label="菜单"><Caret color={GREY} /></Tab>
            </Group>
          </Bounded>
          <Bounded $h={18}>
            <Legend>日线(复权)&nbsp; 盛和资源</Legend>
            <ChartTools>
              {[Settings, Feather, Eye, BriefcaseBusiness, Hand, LockOpen, CirclePlus, CircleMinus].map((I, i) => (
                <button key={i} aria-label={`工具${i + 1}`}><I size={15} strokeWidth={1.8} /></button>
              ))}
            </ChartTools>
          </Bounded>
          <PriceChart />

          <Row $h={20} $top={1}>
            <Legend>
              <Ink $c={CYAN}>总手: 148.1万 </Ink><Trend />
              <Ink $c="#ff0">MAVOL5: 103.0万 </Ink><Trend />
              <Ink $c="#fff">MAVOL10: 100.1万 </Ink><Trend />&nbsp; 成交量已复权
            </Legend>
          </Row>
          <VolumeChart />
          <Row $h={21} $top={2} $bottom={1}>
            {VOL_TABS.map((t) => (
              <Tab key={t} $active={t === "虚拟成交量"}>
                {t.replace("*", "")}
                {t.endsWith("*") && <Hot />}
              </Tab>
            ))}
            <Tab $pad={3}><Tag>L2</Tag> 资金抄底<Hot /></Tab>
          </Row>
          <Bounded $h={19}>
            <Legend>
              MACD(12,26,9) <Ink $c={GREEN}>MACD: -0.229 </Ink><Trend />
              <Ink $c="#fff">DIFF: -0.038 </Ink><Trend />
              <Ink $c="#ff0">DEA: +0.077 </Ink><Trend down />
            </Legend>
            <Group $edge>
              <Tab $pad={12}>优选参数</Tab>
              <Tab $pad={12} $active>默认参数</Tab>
              <Tab $pad={8}>指标说明</Tab>
            </Group>
          </Bounded>
          <MacdChart />
          <Row $h={16} $top={1}>
            <Tab $lead={4} $pad={6}>设置</Tab>
            <Tab $lead={4} $pad={6}><Tag $round>NEW</Tag>指标广场</Tab>
            <Tab $pad={8}><Bot size={16} />新建</Tab>
            {IND_TABS.map((t) => (
              <Tab key={t} $pad={6} $active={t === "MACD"}>{t}</Tab>
            ))}
          </Row>
          <Row $h={23} $top={3} $bottom={1}>
            {NEWS_TABS.map((t) => (
              <Tab key={t} $active={t === "个股新闻"}>{t}</Tab>
            ))}
            <Collapse aria-label="收起资讯">
              <svg width="11" height="12"><path d="M4 0h3v4h4L5.500 9 0 4h4zM0 10h11v2H0z" fill="#d8d8d8" /></svg>
            </Collapse>
          </Row>
          <Splitter />
        </Center>

        <Quote>
          <NameRow>
            <Ink $c="#ffff80"><b>R</b></Ink>
            <StockName>盛和资源 600392</StockName>
            <Settings size={15} color="#606060" strokeWidth={3} />
          </NameRow>
          <RatioRow>
            委比<b>-19.92%</b><b>-2632</b>
            <Trade $bg="#800000">买</Trade>
            <Trade $bg="#006000">卖</Trade>
          </RatioRow>
          <Book $h={106}><Orders side="卖" rows={SELL} /></Book>
          <Strength />
          <Book $h={90} $plain><Orders side="买" rows={BUY} partial /></Book>
          <BigOrder>
            <b>22.60</b>元有<i><b>1922</b>手</i>大买单<a href="#">点击查看</a>
          </BigOrder>
          <Box>
            <Stats>
              <tbody>
                {STATS.map(([a, av, ac, b, bv, bc]) => (
                  <tr key={a}>
                    <th scope="row">{a}</th>
                    <td><Ink $c={ac}>{withUnit(av)}</Ink></td>
                    <th scope="row">{b}</th>
                    <td><Ink $c={bc}>{withUnit(bv)}</Ink></td>
                  </tr>
                ))}
              </tbody>
            </Stats>
          </Box>
          <Now>
            <strong>现价</strong><span>22.68</span><strong>均价</strong><span>22.95</span><time>2025-09-26</time>
          </Now>
          <MiniBox><MiniChart /></MiniBox>
          <MiniTabs>
            {[..."细诊分筹焰指财"].map((t) => (
              <Tab key={t} $active={t === "分"}>{t}</Tab>
            ))}
          </MiniTabs>
        </Quote>
      </Main>

      <Indexes>
        {INDEXES.map(([name, value, change, percent, amount]) => (
          <IndexCell key={name}>
            {name}<b>{value}</b><b>{change}</b><b>{percent}</b><b>{amount}<small>亿</small></b>
          </IndexCell>
        ))}
      </Indexes>
      <Bottom>
        <Group>
          {["手机端", "反馈", "日记", "测速", "行情", "7*24快讯", "盯盘"].map((t) => (
            <Tab key={t} $lead={3} $pad={4}>{t}</Tab>
          ))}
          <Tab $pad={9} aria-label="助手"><Bot size={16} /></Tab>
        </Group>
        <Ticker>
          <span><b>19:06</b> 央行：下阶段建议加强货币政策调控，提高前瞻性、针对性、有效性</span>
          <span>想炒股先开户，点击此处即刻前往</span>
          <span><b>18:59</b> 沪硅产业：拟发行股份及支付现</span>
        </Ticker>
        <Search aria-label="搜索" placeholder="代码/名称/简拼/功能" />
        <Clock>:16</Clock>
      </Bottom>
      <Edge />

      <Watermark>
        <svg width="56" height="56" viewBox="0 0 56 56" fill="none" stroke="currentColor" strokeWidth="5" strokeLinecap="round" strokeLinejoin="round">
          <path d="M20 4C36-2 53 10 53 28c0 9-3 16-8 21L33 38c-3-3-3-6-1-9l11-10M12 8l13 12c2 2 2 5 0 7L14 38M12 8C0 17 0 37 11 46c8 7 19 9 28 5" />
        </svg>
        <b>雪</b><b>球</b><span>:</span>戴维斯双击
      </Watermark>
      <Tip>
        网络   3{"\n"}<i>Internet 访问</i>
      </Tip>
    </Page>
  );
};

export default App;
